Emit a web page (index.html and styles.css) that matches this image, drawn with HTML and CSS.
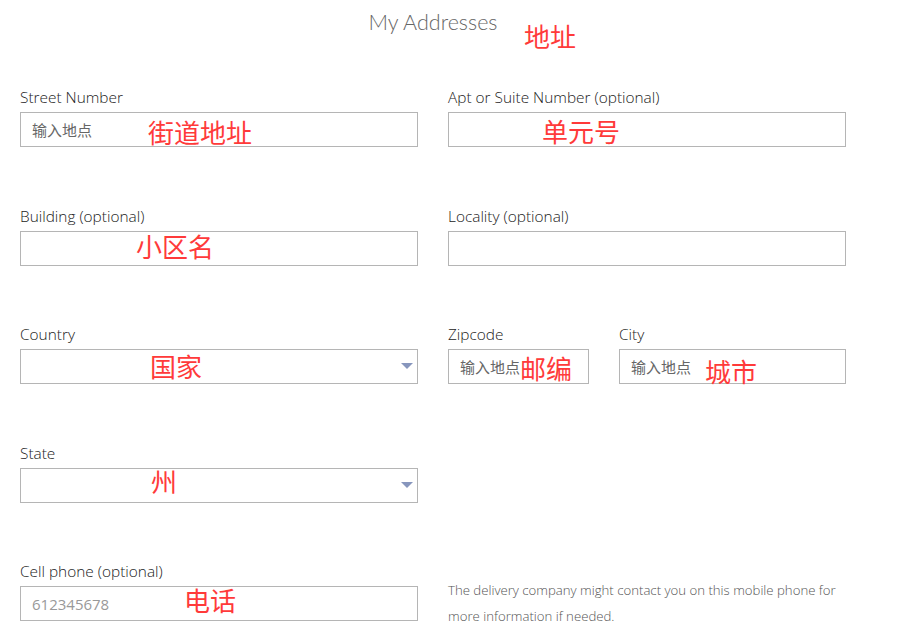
FILE: index.html
```html
<!DOCTYPE html>
<html lang="zh-CN">
<head>
    <meta charset="UTF-8">
    <title>My Addresses</title>
    <link rel="stylesheet" href="styles.css">
</head>
<body>
    <h1 class="title">My Addresses</h1>

    <form class="address-form">
        <div class="field">
            <label>Street Number</label>
            <input class="box" type="text" placeholder="输入地点">
        </div>
        <div class="field">
            <label>Apt or Suite Number (optional)</label>
            <input class="box" type="text">
        </div>

        <div class="field">
            <label>Building (optional)</label>
            <input class="box" type="text">
        </div>
        <div class="field">
            <label>Locality (optional)</label>
            <input class="box" type="text">
        </div>

        <div class="field">
            <label>Country</label>
            <div class="select-wrap">
                <select class="box"></select>
            </div>
        </div>
        <div class="split">
            <div class="field">
                <label>Zipcode</label>
                <input class="box" type="text" placeholder="输入地点">
            </div>
            <div class="field">
                <label>City</label>
                <input class="box" type="text" placeholder="输入地点">
            </div>
        </div>

        <div class="field">
            <label>State</label>
            <div class="select-wrap">
                <select class="box"></select>
            </div>
        </div>
        <div></div>

        <div class="field">
            <label>Cell phone (optional)</label>
            <input class="box phone" type="text" placeholder="612345678">
        </div>
        <p class="help">The delivery company might contact you on this mobile phone for more information if needed.</p>
    </form>

    <!-- 標註文字 -->
    <span class="note n-title">地址</span>
    <span class="note n-street">街道地址</span>
    <span class="note n-apt">单元号</span>
    <span class="note n-building">小区名</span>
    <span class="note n-country">国家</span>
    <span class="note n-zip">邮编</span>
    <span class="note n-city">城市</span>
    <span class="note n-state">州</span>
    <span class="note n-phone">电话</span>
</body>
</html>
```

FILE: styles.css
```css
/* 基本樣式 */
body {
    margin: 0;
    position: relative;
    background: #fff;
    font-family: "Open Sans", "Noto Sans CJK SC", sans-serif;
    color: #333;
}

.title {
    margin: 0;
    height: 88px;
    padding: 8px 32px 0 0;
    box-sizing: border-box;
    text-align: center;
    font-family: "Lato", sans-serif;
    font-weight: 300;
    font-size: 21.5px;
    line-height: 28px;
    color: #666;
}

/* 表單網格 */
.address-form {
    display: grid;
    grid-template-columns: 398px 398px;
    column-gap: 30px;
    row-gap: 59.5px;
    padding-left: 20px;
}

.field {
    display: flex;
    flex-direction: column;
    gap: 4px;
}

.field label {
    font-size: 15.4px;
    font-weight: 300;
    line-height: 20px;
    color: #222;
}

.box {
    height: 35px;
    box-sizing: border-box;
    border: 1px solid #b5b5b5;
    border-radius: 0;
    background: #fff;
    padding: 0 11px;
    font-family: "Noto Sans CJK SC", "Open Sans", sans-serif;
    font-size: 15px;
    color: #333;
    outline: none;
    width: 100%;
}

.box::placeholder {
    color: #666;
}

.phone {
    font-family: "Open Sans", sans-serif;
}

.phone::placeholder {
    color: #999;
}

.split {
    display: grid;
    grid-template-columns: 141px 1fr;
    column-gap: 30px;
}

/* 下拉選單 */
.select-wrap {
    position: relative;
}

select.box {
    appearance: none;
    -webkit-appearance: none;
    display: block;
}

.select-wrap::after {
    content: "";
    position: absolute;
    right: 5px;
    top: 14px;
    border-left: 6px solid transparent;
    border-right: 6px solid transparent;
    border-top: 6px solid #8796bd;
}

.help {
    margin: 15px 0 0;
    font-size: 13.2px;
    font-weight: 300;
    line-height: 26px;
    color: #555;
}

/* 紅色標註 */
.note {
    position: absolute;
    font-family: "Noto Sans CJK SC", sans-serif;
    font-size: 26px;
    line-height: 26px;
    color: #ff3a3a;
    white-space: nowrap;
}

.n-title { left: 524px; top: 23px; }
.n-street { left: 148px; top: 119px; }
.n-apt { left: 542px; top: 118px; }
.n-building { left: 136px; top: 233px; }
.n-country { left: 150px; top: 353px; }
.n-zip { left: 520px; top: 355px; }
.n-city { left: 705px; top: 358px; }
.n-state { left: 151px; top: 468px; }
.n-phone { left: 184px; top: 587px; }
```
